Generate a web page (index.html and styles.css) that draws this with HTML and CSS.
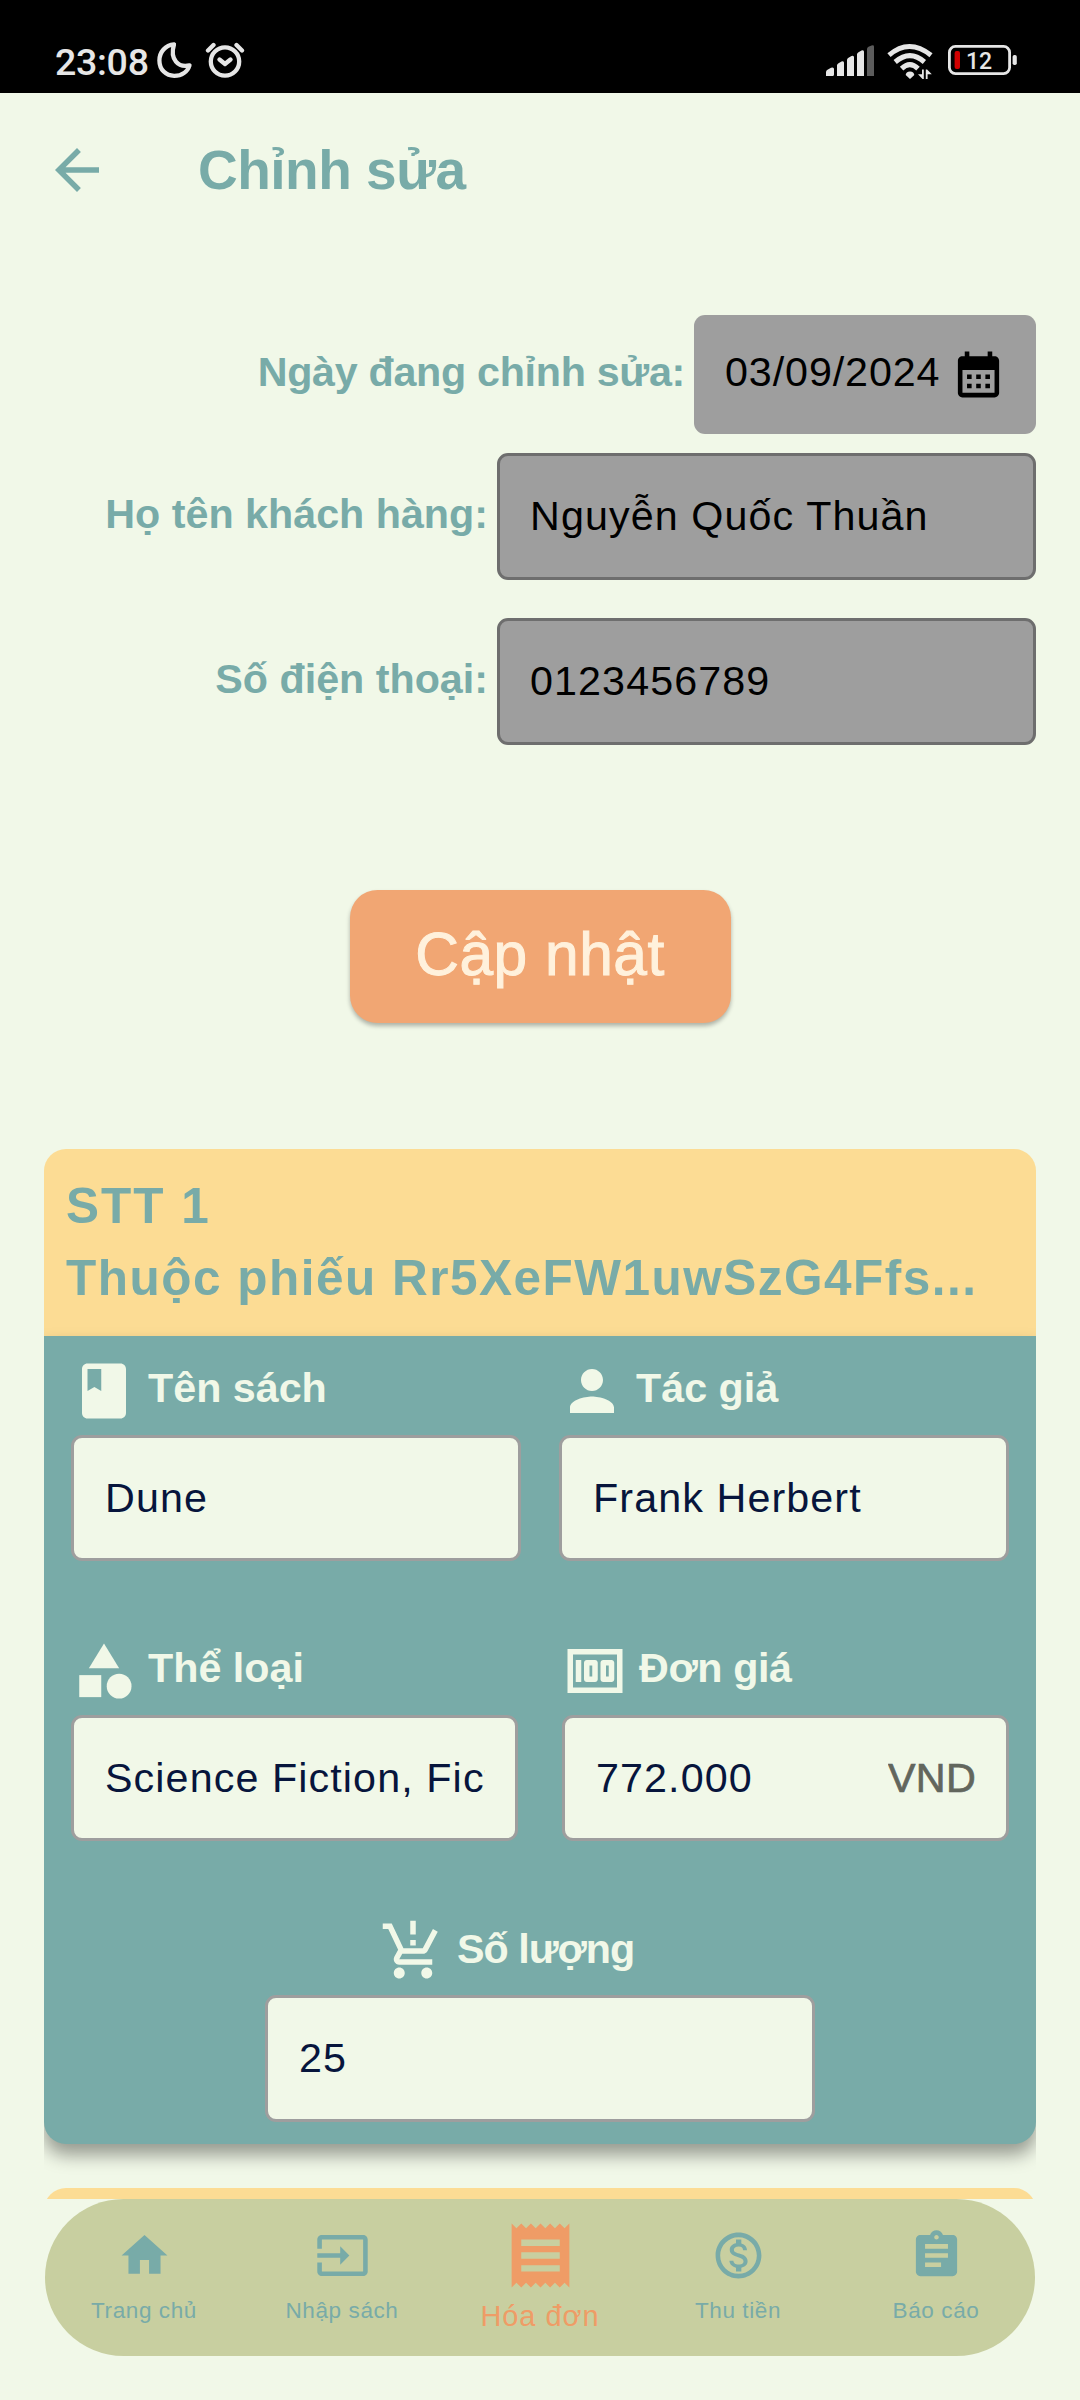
FILE: index.html
```html
<!DOCTYPE html>
<html lang="vi">
<head>
<meta charset="utf-8">
<title>Chỉnh sửa</title>
<link rel="stylesheet" href="styles.css">
</head>
<body>
<div class="screen">
  <div class="status">
    <div class="status-left">
      <span class="clock">23:08</span>
      <svg class="moon" width="38" height="38" viewBox="0 0 38 38"><path d="M18 3.3C9.500 4 3.400 11 3.400 19.400c0 9.300 6.600 15.400 14.800 15.400 7.600 0 13.300-4 15.300-10.500C22.500 27 13.500 18.500 18 3.300z"/></svg>
      <svg class="alarm" width="40" height="38" viewBox="0 0 40 38"><circle cx="20" cy="20.500" r="14.200"/><path d="M3 9.500 8.500 4M31.500 4 37 9.500M14.500 18.500 20 23l5.500-4.500"/></svg>
    </div>
    <div class="status-right">
      <svg width="49" height="32" viewBox="0 0 49 32"><path class="lit" d="M0 31v-4q0-1.500 1.500-2.300L5 22.800q3-1 3 1.200v5.500q0 1.500-1.500 1.500zM11 31V20.500q0-1.500 1.500-2.300l3-1.700q2.500-1 2.500 1.200V31zM21 31V15q0-1.500 1.500-2.300l3-1.700q2.500-1 2.500 1.200V31zM31 31V9.500Q31 8 32.500 7.200l3-1.700Q38 4.500 38 6.700V31z"/><path class="dim" d="M41 31V4q0-1.500 1.500-2.300l3-1.200Q48-.3 48 1.700V31z"/></svg>
      <svg class="wifi" width="48" height="38" viewBox="0 0 48 38"><path class="arc" d="M3 14.200q20-17.400 42 0M9.200 21q14.800-12.600 29.200 0M15.600 27.600q8.300-8 16.400 0"/><path class="solid" d="M24 30.500c2.600 0 4.300 1.700 4.300 3.600L24 38l-4.300-3.900c0-1.900 1.700-3.600 4.300-3.600zM36 28.500h1.800V38h-1.300l-4.500-4.800h4zM39.800 28.500h1.300l4.700 4.800h-4.200V38h-1.800z"/></svg>
      <svg class="battery" width="70" height="30" viewBox="0 0 70 30"><rect class="shell" x="1.400" y="1.400" width="60.200" height="27.200" rx="6"/><rect class="low" x="6.600" y="6" width="5.400" height="18" rx="2"/><rect class="lit" x="64.600" y="10" width="4.200" height="10" rx="1.800"/><text x="18" y="23.500">12</text></svg>
    </div>
  </div>

  <header class="appbar">
    <svg class="icon" viewBox="0 0 24 24"><path d="M20 11H7.830l5.590-5.590L12 4l-8 8 8 8 1.410-1.410L7.830 13H20z"/></svg>
    <h1>Chỉnh sửa</h1>
  </header>

  <section class="form">
    <div class="form-row date-row">
      <label class="ngay">Ngày đang chỉnh sửa:</label>
      <div class="date"><span>03/09/2024</span>
        <svg viewBox="0 0 24 24"><path d="M19 4h-1V2h-2v2H8V2H6v2H5c-1.110 0-1.990.9-1.990 2L3 20c0 1.100.89 2 2 2h14c1.100 0 2-.9 2-2V6c0-1.100-.9-2-2-2zm0 16H5V10h14v10zM9 14H7v-2h2v2zm4 0h-2v-2h2v2zm4 0h-2v-2h2v2zm-8 4H7v-2h2v2zm4 0h-2v-2h2v2zm4 0h-2v-2h2v2z"/></svg>
      </div>
    </div>
    <div class="form-row">
      <label>Họ tên khách hàng:</label>
      <div class="input locked"><span>Nguyễn Quốc Thuần</span></div>
    </div>
    <div class="form-row phone-row">
      <label>Số điện thoại:</label>
      <div class="input locked"><span>0123456789</span></div>
    </div>
  </section>

  <button class="update" type="button">Cập nhật</button>

  <main class="list">
    <article class="card">
      <div class="card-head">
        <div class="stt">STT 1</div>
        <div class="slip">Thuộc phiếu Rr5XeFW1uwSzG4Ffs...</div>
      </div>
      <div class="card-body">
        <div class="pair">
          <div class="field">
            <div class="label"><svg class="icon" viewBox="0 0 24 24"><path d="M18 2H6c-1.100 0-2 .9-2 2v16c0 1.100.9 2 2 2h12c1.100 0 2-.9 2-2V4c0-1.100-.9-2-2-2zM6 4h5v8l-2.500-1.500L6 12V4z"/></svg><span>Tên sách</span></div>
            <div class="input"><span>Dune</span></div>
          </div>
          <div class="field">
            <div class="label"><svg class="icon" viewBox="0 0 24 24"><path d="M12 12c2.210 0 4-1.790 4-4s-1.790-4-4-4-4 1.790-4 4 1.790 4 4 4zm0 2c-2.670 0-8 1.340-8 4v2h16v-2c0-2.660-5.330-4-8-4z"/></svg><span>Tác giả</span></div>
            <div class="input"><span>Frank Herbert</span></div>
          </div>
        </div>
        <div class="pair wide-gap">
          <div class="field">
            <div class="label"><svg class="icon" viewBox="0 0 24 24"><path d="M12 2l-5.500 9h11z"/><circle cx="17.500" cy="17.500" r="4.500"/><path d="M3 13.500h8v8H3z"/></svg><span>Thể loại</span></div>
            <div class="input"><span>Science Fiction, Fiction</span></div>
          </div>
          <div class="field">
            <div class="label"><svg class="icon" viewBox="0 0 24 24"><path d="M5 8h2v8H5V8zM12 8H9c-.55 0-1 .45-1 1v6c0 .55.45 1 1 1h3c.55 0 1-.45 1-1V9c0-.55-.45-1-1-1zm-1 6h-1v-4h1v4zM18 8h-3c-.55 0-1 .45-1 1v6c0 .55.45 1 1 1h3c.55 0 1-.45 1-1V9c0-.55-.45-1-1-1zm-1 6h-1v-4h1v4zM2 4v16h20V4H2zm18 14H4V6h16v12z"/></svg><span class="tight">Đơn giá</span></div>
            <div class="input"><span>772.000</span><span class="unit">VND</span></div>
          </div>
        </div>
        <div class="field quantity">
          <div class="label"><svg class="icon" viewBox="0 0 24 24"><path d="M13 10h-2V8h2v2zM13 6h-2V1h2v5zM7 18c-1.100 0-1.990.9-1.990 2S5.900 22 7 22s2-.9 2-2-.9-2-2-2zM17 18c-1.100 0-1.990.9-1.990 2s.89 2 1.990 2 2-.9 2-2-.9-2-2-2zM8.100 13h7.450c.75 0 1.410-.41 1.750-1.030L21 4.960 19.250 4l-3.700 7H8.530L4.270 2H1v2h2l3.600 7.590-1.350 2.440C4.520 15.370 5.480 17 7 17h12v-2H7l1.100-2z"/></svg><span class="tighter">Số lượng</span></div>
          <div class="input"><span>25</span></div>
        </div>
      </div>
    </article>
    <article class="card">
      <div class="card-head"></div>
    </article>
  </main>

  <nav class="nav">
    <a class="tab"><svg viewBox="0 0 24 24"><path d="M10 20v-6h4v6h5v-8h3L12 3 2 12h3v8z"/></svg><span>Trang chủ</span></a>
    <a class="tab"><svg viewBox="0 0 24 24"><path d="M21 3.010H3c-1.100 0-2 .9-2 2V9h2V4.990h18v14.030H3V15H1v4.010c0 1.100.9 1.980 2 1.980h18c1.100 0 2-.88 2-1.980v-14c0-1.110-.9-2-2-2zM11 16l4-4-4-4v3H1v2h10v3z"/></svg><span>Nhập sách</span></a>
    <a class="tab active"><svg viewBox="0 0 24 24"><path d="M18 17H6v-2h12v2zm0-4H6v-2h12v2zm0-4H6V7h12v2zM3 22l1.500-1.500L6 22l1.500-1.500L9 22l1.500-1.500L12 22l1.500-1.500L15 22l1.500-1.500L18 22l1.500-1.500L21 22V2l-1.500 1.500L18 2l-1.500 1.500L15 2l-1.500 1.500L12 2l-1.500 1.500L9 2 7.500 3.500 6 2 4.500 3.500 3 2v20z"/></svg><span>Hóa đơn</span></a>
    <a class="tab"><svg viewBox="0 0 24 24"><path d="M12 2C6.480 2 2 6.480 2 12s4.480 10 10 10 10-4.480 10-10S17.520 2 12 2zm0 18c-4.410 0-8-3.590-8-8s3.590-8 8-8 8 3.590 8 8-3.590 8-8 8zm.31-8.860c-1.770-.45-2.340-.94-2.340-1.670 0-.84.79-1.430 2.100-1.430 1.380 0 1.900.66 1.940 1.640h1.710c-.05-1.340-.87-2.570-2.490-2.970V5H10.900v1.690c-1.510.32-2.720 1.300-2.720 2.810 0 1.790 1.490 2.690 3.660 3.210 1.950.46 2.340 1.150 2.340 1.870 0 .53-.39 1.390-2.100 1.390-1.600 0-2.230-.72-2.320-1.640H8.040c.1 1.700 1.360 2.660 2.860 2.970V19h2.340v-1.670c1.520-.29 2.720-1.160 2.730-2.770-.01-2.200-1.900-2.960-3.660-3.420z"/></svg><span>Thu tiền</span></a>
    <a class="tab"><svg viewBox="0 0 24 24"><path d="M19 3h-4.180C14.400 1.840 13.300 1 12 1c-1.300 0-2.400.84-2.820 2H5c-1.100 0-2 .9-2 2v14c0 1.100.9 2 2 2h14c1.100 0 2-.9 2-2V5c0-1.100-.9-2-2-2zm-7 0c.55 0 1 .45 1 1s-.45 1-1 1-1-.45-1-1 .45-1 1-1zm2 14H7v-2h7v2zm3-4H7v-2h10v2zm0-4H7V7h10v2z"/></svg><span>Báo cáo</span></a>
  </nav>
</div>
</body>
</html>
```
FILE: styles.css
```css
* { box-sizing: border-box; }

body {
  margin: 0;
  background: #f1f8e8;
  font-family: "Liberation Sans", Arial, sans-serif;
}

svg { display: block; flex: none; fill: currentColor; }

.screen {
  width: 1080px;
  height: 2400px;
  display: flex;
  flex-direction: column;
  overflow: hidden;
}

/* Status bar */
.status {
  height: 93px;
  flex: none;
  background: #000;
  color: #e6e6e6;
  display: flex;
  justify-content: space-between;
  padding: 41px 62px 0 55px;
}
.status-left, .status-right { display: flex; align-items: flex-start; }
.clock {
  font: 500 37.500px/44px Roboto, sans-serif;
  width: 101px;
  letter-spacing: -.3px;
  margin-top: -1px;
}
.moon, .alarm, .wifi .arc {
  fill: none;
  stroke: currentColor;
  stroke-width: 4.300px;
  stroke-linejoin: round;
  stroke-linecap: round;
}
.alarm { margin-left: 11px; }
.status-right > svg:first-child { margin-top: 4px; }
.wifi { margin: 0 0 0 11px; overflow: visible; }
.wifi .arc { stroke-width: 5px; stroke-linecap: butt; }
.battery { margin: 4px 0 0 14px; }
.battery text { font: 500 23px Roboto, sans-serif; }
.battery .shell { fill: none; stroke: currentColor; stroke-width: 2.800px; }
.battery .low { fill: #d00000; }
.dim { fill: #5c5c5c; }

/* App bar */
.icon { width: 66px; height: 66px; }
.appbar {
  height: 154px;
  flex: none;
  display: flex;
  align-items: center;
  padding-left: 44px;
  color: #78aba8;
}
.appbar h1 {
  margin: 0 0 0 88px;
  font-size: 55px;
  line-height: 66px;
  letter-spacing: -.5px;
}

/* Invoice form */
.form {
  flex: none;
  padding: 68px 44px 0;
  display: flex;
  flex-direction: column;
}
.form-row {
  display: flex;
  justify-content: flex-end;
  align-items: center;
  gap: 9px;
}
.date-row { margin-bottom: 19px; }
.phone-row { margin-top: 38.500px; }
.form-row label {
  color: #78aba8;
  font-size: 41.250px;
  font-weight: bold;
  padding-bottom: 3px;
}
.form-row .ngay { letter-spacing: -.3px; padding-bottom: 4px; }
.date {
  width: 342px;
  height: 119px;
  border-radius: 11px;
  background: #9e9e9e;
  display: flex;
  align-items: center;
  justify-content: space-between;
  padding: 0 30px 0 31px;
  font-size: 41.250px;
  letter-spacing: .9px;
}
.date span { padding-bottom: 4px; }
.date svg { width: 55px; height: 55px; }
.input {
  height: 126.500px;
  border: 3px solid #9e9e9e;
  border-radius: 11px;
  background: #f1f8e8;
  color: #07153c;
  font-size: 41.250px;
  letter-spacing: 1.100px;
  padding: 0 30px 0 31px;
  display: flex;
  align-items: center;
  justify-content: space-between;
  white-space: nowrap;
}
.input span { overflow: hidden; line-height: 60px; }
.locked {
  width: 539px;
  border-color: #6e6e6e;
  background: #9e9e9e;
  color: #000;
  padding-left: 30px;
}
.unit {
  color: #62665d;
  letter-spacing: .3px;
  -webkit-text-stroke: .7px #62665d;
}

.update {
  flex: none;
  align-self: center;
  width: 381px;
  height: 133px;
  margin: 145px 0 126px;
  padding: 0 0 3px;
  border: 0;
  border-radius: 27.500px;
  background: #f1a673;
  box-shadow: 0 3px 4px rgba(0, 0, 0, .28);
  color: #fff1dc;
  font: 60.500px/1 "Liberation Sans", Arial, sans-serif;
  letter-spacing: .5px;
  -webkit-text-stroke: 1px #fff1dc;
}

.list {
  flex: 1 1 0;
  min-height: 0;
  margin: 0 44px;
  overflow: hidden;
  display: flex;
  flex-direction: column;
  gap: 44px;
}
.card { flex: none; }
.card-head {
  height: 187px;
  padding: 21px 22px 0;
  border-radius: 22px 22px 0 0;
  background: #fcdc94;
  color: #78aba8;
  font-size: 49.500px;
  font-weight: bold;
  line-height: 72px;
  white-space: nowrap;
}
.stt { letter-spacing: 2px; }
.slip { letter-spacing: 1.500px; }
.card-body {
  height: 808px;
  padding: 22px 27px 0;
  border-radius: 0 0 22px 22px;
  background: #78aba8;
  box-shadow: 0 11px 18px rgba(0, 0, 0, .38);
  display: flex;
  flex-direction: column;
  gap: 76.800px;
}
.pair { display: grid; grid-template-columns: 1fr 1fr; gap: 38px; }
.wide-gap { gap: 44px; }
.field { display: flex; flex-direction: column; gap: 11px; min-width: 0; }
.label {
  display: flex;
  align-items: center;
  gap: 11px;
  color: #f1f8e8;
  font-size: 41.250px;
  font-weight: bold;
}
.label span { padding-bottom: 4px; }
.label .tight { letter-spacing: -.4px; }
.label .tighter { letter-spacing: -1px; }
.quantity { width: 550px; margin-left: 194px; }
.quantity .label { margin-left: 115px; }

/* Bottom navigation */
.nav {
  flex: none;
  height: 157px;
  margin: 0 45px 44px;
  border-radius: 79px;
  background: #c8cfa0;
  display: grid;
  grid-template-columns: repeat(5, 1fr);
}
.tab {
  display: flex;
  flex-direction: column;
  align-items: center;
  padding-top: 29px;
  color: #78aba8;
  font-size: 22.500px;
  letter-spacing: .6px;
}
.tab svg { width: 55px; height: 55px; }
.tab span { line-height: 28px; margin-top: 14px; }
.active { padding-top: 18px; color: #ef9c66; font-size: 28.900px; letter-spacing: 1px; }
.active svg { width: 77px; height: 77px; }
.active span { margin-top: 8px; }
```
